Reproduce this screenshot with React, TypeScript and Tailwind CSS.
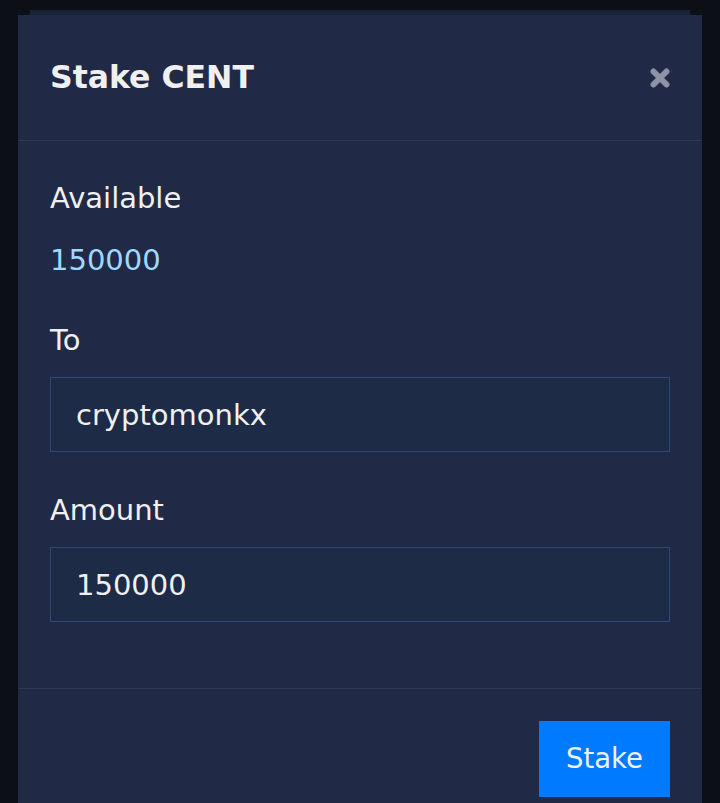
export default function App() {
  return (
    <div className="relative h-[803px] w-[720px] overflow-hidden bg-[#0c0f16] font-['DejaVu_Sans',sans-serif]">
      {/* page card behind the modal */}
      <div className="mx-[30px] mt-[10px] h-[900px] border-t-[5px] border-[#17223a] bg-[#111726]" />

      <div className="absolute left-[18px] top-[15px] w-[684px] bg-[#202946] text-[#f0f0f0]">
        <div className="flex h-[126px] items-center justify-between border-b border-[#2f3a4f] pl-8 pr-[32px]">
          <h2 className="text-[31.5px] font-bold leading-none">Stake CENT</h2>
          <button className="flex h-5 w-5 items-center justify-center text-[#8e93a6]">
            <svg viewBox="0 0 20 20" className="h-5 w-5">
              <path d="M3.5 3.5L16.5 16.5M16.5 3.5L3.5 16.5" stroke="currentColor" strokeWidth="6" strokeLinecap="round" />
            </svg>
          </button>
        </div>

        <div className="flex flex-col px-8 pb-[66px] pt-[37px] text-[29px]">
          <div className="leading-[40px]">Available</div>
          <div className="mt-[22px] leading-[40px] text-[#a0d8ff]">150000</div>
          <div className="mt-[40px] leading-[40px]">To</div>
          <input
            defaultValue="cryptomonkx"
            className="mt-[17px] h-[75px] border border-[#2c4a73] bg-[#1d2b46] px-[25px] text-[29px] text-[#f0f0f0] outline-none"
          />
          <div className="mt-[38px] leading-[40px]">Amount</div>
          <input
            defaultValue="150000"
            className="mt-[17px] h-[75px] border border-[#2c4a73] bg-[#1d2b46] px-[25px] text-[29px] text-[#f0f0f0] outline-none"
          />
        </div>

        <div className="flex justify-end border-t border-[#2f3a4f] px-8 pb-8 pt-8">
          <button className="h-[76px] w-[131px] bg-[#007bff] text-[27.5px] text-[#f0f0f0]">Stake</button>
        </div>
      </div>
    </div>
  )
}
